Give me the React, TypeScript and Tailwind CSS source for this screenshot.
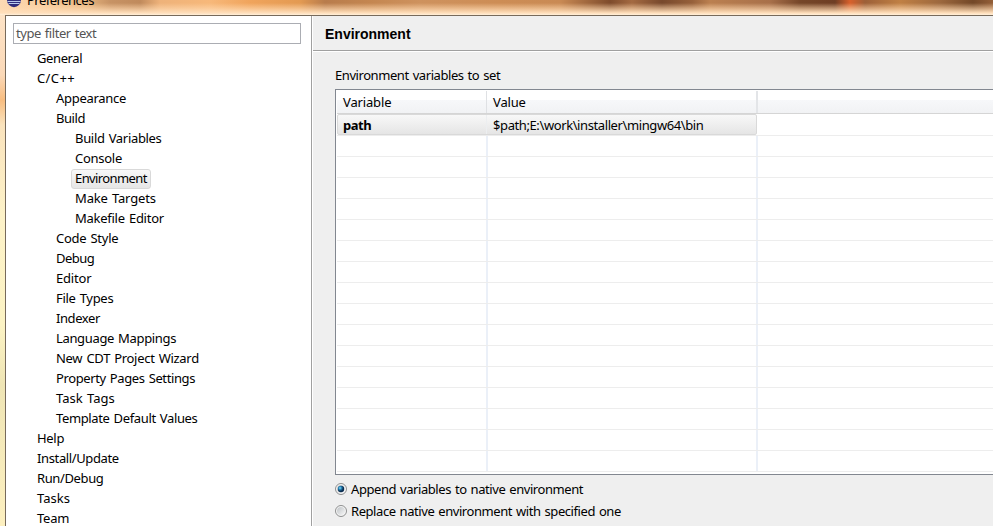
import React from "react";

type Node = { label: string; level: 0 | 1 | 2; tracking: string; selected?: boolean };

const nodes: Node[] = [
  { label: "General", level: 0, tracking: "tracking-[-0.4px]" },
  { label: "C/C++", level: 0, tracking: "tracking-[0.4px]" },
  { label: "Appearance", level: 1, tracking: "tracking-[-0.28px]" },
  { label: "Build", level: 1, tracking: "tracking-[-0.45px]" },
  { label: "Build Variables", level: 2, tracking: "tracking-[-0.32px]" },
  { label: "Console", level: 2, tracking: "tracking-[-0.28px]" },
  { label: "Environment", level: 2, tracking: "tracking-[-0.6px]", selected: true },
  { label: "Make Targets", level: 2, tracking: "tracking-[-0.16px]" },
  { label: "Makefile Editor", level: 2, tracking: "tracking-[-0.26px]" },
  { label: "Code Style", level: 1, tracking: "tracking-[-0.26px]" },
  { label: "Debug", level: 1, tracking: "tracking-[-0.5px]" },
  { label: "Editor", level: 1, tracking: "tracking-[-0.2px]" },
  { label: "File Types", level: 1, tracking: "tracking-[-0.3px]" },
  { label: "Indexer", level: 1, tracking: "tracking-[-0.42px]" },
  { label: "Language Mappings", level: 1, tracking: "tracking-[-0.34px]" },
  { label: "New CDT Project Wizard", level: 1, tracking: "tracking-[-0.29px]" },
  { label: "Property Pages Settings", level: 1, tracking: "tracking-[-0.38px]" },
  { label: "Task Tags", level: 1, tracking: "tracking-[0px]" },
  { label: "Template Default Values", level: 1, tracking: "tracking-[-0.36px]" },
  { label: "Help", level: 0, tracking: "tracking-[-0.3px]" },
  { label: "Install/Update", level: 0, tracking: "tracking-[-0.37px]" },
  { label: "Run/Debug", level: 0, tracking: "tracking-[-0.38px]" },
  { label: "Tasks", level: 0, tracking: "tracking-[0px]" },
  { label: "Team", level: 0, tracking: "tracking-[-0.25px]" },
];

const indent = ["pl-[26px]", "pl-[45px]", "pl-[64px]"];

function Titlebar() {
  return (
    <div className="relative h-[15px] overflow-hidden bg-[linear-gradient(90deg,#fcd9b4_0px,#f9cfa0_40px,#e7b57f_85px,#c79365_110px,#c08a5c_140px,#eeb27a_160px,#f7b87a_210px,#f0a45c_250px,#e39a52_300px,#b87c4c_325px,#c48650_370px,#ce925e_420px,#cd8d55_500px,#c98a54_560px,#7e4b2c_610px,#a46a42_632px,#77482c_662px,#96603a_692px,#bb8050_710px,#a8704a_770px,#754629_800px,#6e3e24_835px,#d8602c_850px,#9c6038_865px,#c08044_900px,#9c683e_940px,#734828_973px,#945f38_993px)]">
      <div className="absolute inset-0 bg-[linear-gradient(180deg,transparent_0px,transparent_3px,#ffd9b088_8px,#ffdfbb_13px,#fff0da_15px)]" />
      <svg className="absolute left-[7px] top-0" width="15" height="8" viewBox="0 0 15 8">
        <path d="M0 0H14A7 7.2 0 0 1 0 0Z" fill="#302c7c" />
        <path d="M0.5 1.5H13.5M1.5 3.5H12.5" stroke="#b9c9ec" strokeWidth="1" />
      </svg>
      <div className="absolute left-[27px] top-[-9px] h-[18px] text-[13px] leading-[18px] tracking-[-0.5px]">Preferences</div>
    </div>
  );
}

function Tree() {
  return (
    <div className="flex w-[305px] shrink-0 flex-col bg-white pl-[5px]">
      <div className="mt-[7px] ml-[2px] h-[21px] w-[288px] shrink-0 border border-[#abadb3] pl-[2px] leading-[19px] tracking-[-0.44px] text-[#555]">
        <span>type filter text</span>
      </div>
      <div className="mt-[5px] flex flex-col">
        {nodes.map((n) => (
          <div key={n.label} className={`flex h-5 shrink-0 ${indent[n.level]} ${n.tracking}`}>
            <span
              className={
                n.selected
                  ? "-ml-[4px] h-5 w-[80px] rounded-[3px] border border-[#d9d9d9] bg-gradient-to-b from-[#f8f8f8] to-[#e6e6e6] pl-[3px] leading-[16px]"
                  : "leading-[18px]"
              }
            >
              {n.label}
            </span>
          </div>
        ))}
      </div>
    </div>
  );
}

function Table() {
  return (
    <div className="flex h-[386px] w-[658px] flex-col border border-r-0 border-[#828790] bg-white pt-px pl-px">
      <div className="flex h-[23px] shrink-0 border-b border-[#d5d5d5] bg-[linear-gradient(180deg,#fff_0px,#fff_9px,#f7f8fa_9px,#f1f2f4_22px)] leading-[23px] tracking-[-0.15px]">
        <div className="w-[150px] border-r border-[#dfe1e4] pl-[6px]"><span>Variable</span></div>
        <div className="w-[271px] border-r-2 border-[#e3e5e8] pl-[6px]"><span>Value</span></div>
      </div>
      <div className="flex h-[22px] shrink-0 border-b border-[#ededed] leading-[23px]">
        <div className="flex w-[420px] rounded-[2px] border border-[#d9d9d9] bg-gradient-to-b from-[#f8f8f8] to-[#e5e5e5] leading-[21px]">
          <div className="w-[149px] border-r border-[#eceef0] pl-[5px] font-bold tracking-[-0.5px]"><span>path</span></div>
          <div className="pl-[6px] tracking-[-0.4px]"><span>$path;E:\work\installer\mingw64\bin</span></div>
        </div>
      </div>
      {Array.from({ length: 16 }, (_, i) => (
        <div key={i} className="flex h-[21px] shrink-0 border-b border-[#ededed]">
          <div className="w-[151px] border-r-2 border-[#ebf0f8]" />
          <div className="w-[270px] border-r-2 border-[#ebf0f8]" />
        </div>
      ))}
    </div>
  );
}

function Radio({ label, on }: { label: string; on?: boolean }) {
  return (
    <div className="flex h-[22px] items-center">
      <svg width="12" height="12" viewBox="0 0 12 12">
        <defs>
          <radialGradient id="dot" cx="35%" cy="35%">
            <stop offset="0" stopColor="#8fe0f8" />
            <stop offset=".5" stopColor="#2480b4" />
            <stop offset="1" stopColor="#0b2d50" />
          </radialGradient>
          <linearGradient id="well" x2="1" y2="1">
            <stop offset="0" stopColor="#bfc3c6" />
            <stop offset="1" stopColor="#f7f7f7" />
          </linearGradient>
        </defs>
        <circle cx="6" cy="6" r="5.5" fill="#f6f6f6" stroke="#8e8f8f" />
        <circle cx="6" cy="6" r="4" fill="url(#well)" />
        {on && <circle cx="6" cy="6" r="3.2" fill="url(#dot)" />}
      </svg>
      <span className="-mt-px ml-1 tracking-[-0.43px]">{label}</span>
    </div>
  );
}

export default function App() {
  return (
    <div className="flex h-[526px] w-[993px] flex-col overflow-hidden whitespace-pre bg-[#fcebc4] font-['Noto_Sans','Open_Sans',sans-serif] text-[13px] leading-5 [word-spacing:1px] text-black">
      <Titlebar />
      <div className="flex min-h-0 flex-1">
        <div className="w-[5px] shrink-0 bg-[linear-gradient(180deg,#fde3c6_0px,#fbd9b8_60px,#f8bd80_85px,#fae3bd_110px,#fdf2c8_200px,#fcf3c4_310px,#efe5b5_370px,#fdf0c0_511px)]" />
        <div className="flex min-w-0 flex-1 overflow-hidden border-l border-t border-[#776a5b] bg-[#efefef]">
          <Tree />
          <div className="w-[2px] shrink-0 border-l border-[#a0a0a0] bg-white" />
          <div className="flex min-w-0 flex-1 flex-col">
            <div className="h-[36px] shrink-0 border-b border-white">
              <div className="h-[35px] border-b border-[#a0a0a0] pl-3 font-['Liberation_Sans',sans-serif] text-[14px] font-bold leading-[36px]">
                <span>Environment</span>
              </div>
            </div>
            <div className="pl-[22px] pt-[14px]">
              <div className="h-[23px] leading-[18px] tracking-[-0.43px]"><span>Environment variables to set</span></div>
              <Table />
              <div className="pt-[3px]">
                <Radio label="Append variables to native environment" on />
                <Radio label="Replace native environment with specified one" />
              </div>
            </div>
          </div>
        </div>
      </div>
    </div>
  );
}
